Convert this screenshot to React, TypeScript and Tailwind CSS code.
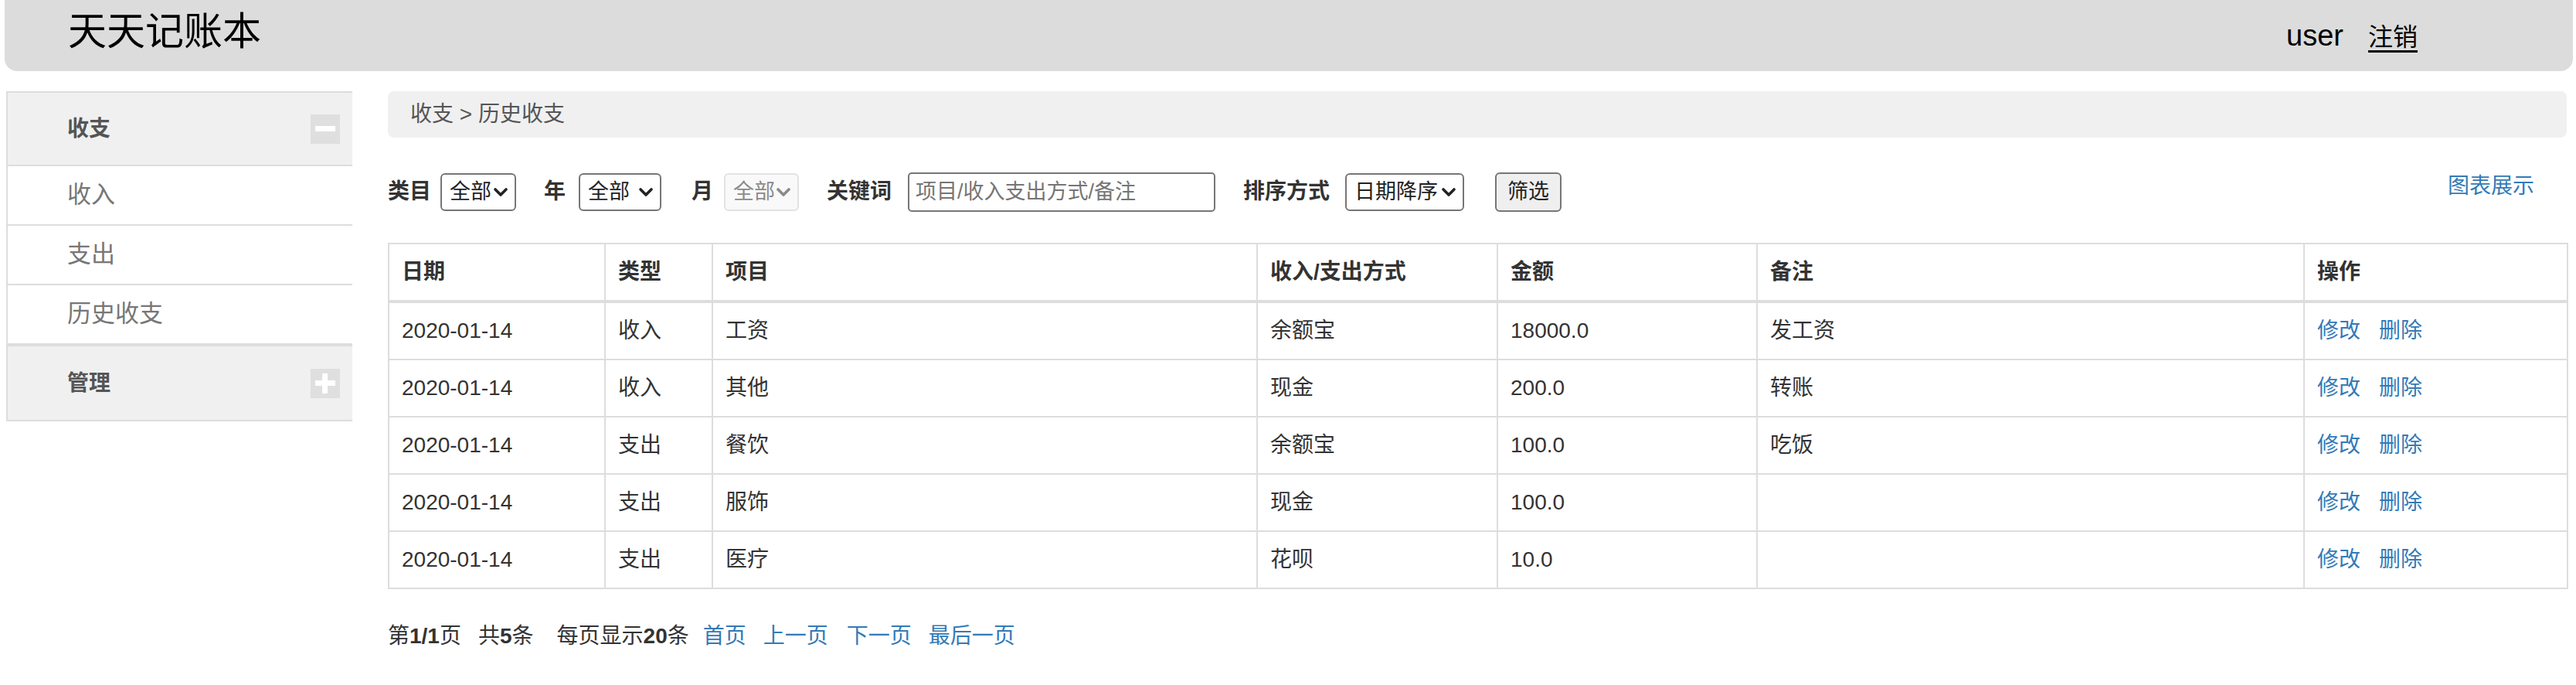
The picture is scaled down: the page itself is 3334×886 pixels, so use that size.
import React from "react";

const rows = [
  { date: "2020-01-14", type: "收入", item: "工资", way: "余额宝", amount: "18000.0", note: "发工资" },
  { date: "2020-01-14", type: "收入", item: "其他", way: "现金", amount: "200.0", note: "转账" },
  { date: "2020-01-14", type: "支出", item: "餐饮", way: "余额宝", amount: "100.0", note: "吃饭" },
  { date: "2020-01-14", type: "支出", item: "服饰", way: "现金", amount: "100.0", note: "" },
  { date: "2020-01-14", type: "支出", item: "医疗", way: "花呗", amount: "10.0", note: "" },
];

function Chevron() {
  return (
    <svg width="20" height="13" viewBox="0 0 20 13" className="shrink-0">
      <path d="M3 3 L10 10 L17 3" fill="none" stroke="currentColor" strokeWidth="3.6" strokeLinecap="round" strokeLinejoin="round" />
    </svg>
  );
}

function FakeSelect({ value, width, disabled }: { value: string; width: string; disabled?: boolean }) {
  return (
    <div
      className={`${width} flex items-center justify-between h-[49px] pl-[10px] pr-[8px] rounded-[6px] border-2 text-[27px] leading-none ${
        disabled ? "border-[#e2e2e2] bg-[#f9f9f9] text-[#8a8a8a]" : "border-[#767676] bg-white text-[#222]"
      }`}
    >
      <span>{value}</span>
      <Chevron />
    </div>
  );
}

function Toggle({ open }: { open: boolean }) {
  return (
    <div className="relative w-[38px] h-[38px] bg-[#dfdfdf]">
      <div className="absolute left-[6px] top-[15px] w-[26px] h-[7px] bg-white" />
      {!open && <div className="absolute left-[15px] top-[6px] w-[7px] h-[26px] bg-white" />}
    </div>
  );
}

function Sidebar() {
  return (
    <aside className="ml-[8px] w-[448px] border-l-2 border-t-2 border-b-2 border-[#dddddd] self-start">
      <div className="h-[95px] bg-[#f0f0f0] border-b-2 border-[#dddddd] flex items-center justify-between pl-[77px] pr-[16px]">
        <span className="text-[28px] font-bold text-[#555]">收支</span>
        <Toggle open />
      </div>
      {["收入", "支出", "历史收支"].map((t) => (
        <div key={t} className="h-[77px] border-b-2 border-[#dddddd] flex items-center pl-[77px] text-[31px] text-[#777]">
          {t}
        </div>
      ))}
      <div className="h-[97px] bg-[#f0f0f0] border-t-2 border-[#dddddd] flex items-center justify-between pl-[77px] pr-[16px]">
        <span className="text-[28px] font-bold text-[#555]">管理</span>
        <Toggle open={false} />
      </div>
    </aside>
  );
}

export default function App() {
  return (
    <div className="min-h-screen bg-white text-[#333] font-['Liberation_Sans','Noto_Sans_CJK_SC',sans-serif]">
      {/* Header */}
      <header className="ml-[6px] mr-[4px] h-[92px] bg-[#dcdcdc] rounded-b-[16px] flex items-center justify-between pl-[82px] pr-[201px]">
        <h1 className="text-[50px] leading-none font-normal text-black pb-[10px]">天天记账本</h1>
        <div className="flex items-baseline gap-[32px] text-black">
          <span className="text-[38px]">user</span>
          <a className="text-[32px] underline underline-offset-[6px]">注销</a>
        </div>
      </header>

      <div className="flex mt-[26px]">
        <Sidebar />

        <main className="ml-[46px] w-[2820px]">
          {/* Breadcrumb */}
          <div className="h-[60px] bg-[#f0f0f0] rounded-[8px] flex items-center pl-[29px] text-[28px] text-[#555]">
            收支 &gt; 历史收支
          </div>

          {/* Filters */}
          <div className="mt-[42px] flex items-center text-[28px]">
            <span className="font-bold text-[#333]">类目</span>
            <div className="ml-[12px]">
              <FakeSelect value="全部" width="w-[98px]" />
            </div>
            <span className="ml-[36px] font-bold">年</span>
            <div className="ml-[17px]">
              <FakeSelect value="全部" width="w-[107px]" />
            </div>
            <span className="ml-[39px] font-bold">月</span>
            <div className="ml-[14px]">
              <FakeSelect value="全部" width="w-[97px]" disabled />
            </div>
            <span className="ml-[36px] font-bold">关键词</span>
            <input
              className="ml-[21px] h-[51px] w-[398px] border-2 border-[#767676] rounded-[5px] px-[8px] text-[27px] text-[#222] placeholder:text-[#757575] outline-none"
              placeholder="项目/收入支出方式/备注"
            />
            <span className="ml-[36px] font-bold">排序方式</span>
            <div className="ml-[20px]">
              <FakeSelect value="日期降序" width="w-[154px]" />
            </div>
            <button className="ml-[40px] h-[51px] w-[86px] bg-[#efefef] border-2 border-[#767676] rounded-[6px] text-[27px] text-[#222]">
              筛选
            </button>
            <a className="ml-auto mr-[42px] mb-[14px] text-[28px] text-[#337ab7]">图表展示</a>
          </div>

          {/* Table */}
          <table className="mt-[38px] w-[2820px] table-fixed border-collapse border-2 border-[#dddddd] text-[28px] leading-[40px]">
            <colgroup>
              <col className="w-[280px]" />
              <col className="w-[139px]" />
              <col className="w-[705px]" />
              <col className="w-[311px]" />
              <col className="w-[336px]" />
              <col className="w-[708px]" />
              <col className="w-[341px]" />
            </colgroup>
            <thead>
              <tr>
                {["日期", "类型", "项目", "收入/支出方式", "金额", "备注", "操作"].map((h) => (
                  <th key={h} className="text-left font-bold px-[16px] py-[16px] border-2 border-b-4 border-[#dddddd]">
                    {h}
                  </th>
                ))}
              </tr>
            </thead>
            <tbody>
              {rows.map((r, i) => (
                <tr key={i}>
                  <td className="px-[16px] py-[16px] border-2 border-[#dddddd]">{r.date}</td>
                  <td className="px-[16px] py-[16px] border-2 border-[#dddddd]">{r.type}</td>
                  <td className="px-[16px] py-[16px] border-2 border-[#dddddd]">{r.item}</td>
                  <td className="px-[16px] py-[16px] border-2 border-[#dddddd]">{r.way}</td>
                  <td className="px-[16px] py-[16px] border-2 border-[#dddddd]">{r.amount}</td>
                  <td className="px-[16px] py-[16px] border-2 border-[#dddddd]">{r.note}</td>
                  <td className="px-[16px] py-[16px] border-2 border-[#dddddd] text-[#337ab7]">
                    <a className="mr-[24px]">修改</a>
                    <a>删除</a>
                  </td>
                </tr>
              ))}
            </tbody>
          </table>

          {/* Pagination */}
          <div className="mt-[41px] flex items-center text-[28px] leading-[40px]">
            <span>
              第<b>1/1</b>页
            </span>
            <span className="ml-[22px]">
              共<b>5</b>条
            </span>
            <span className="ml-[30px]">
              每页显示<b>20</b>条
            </span>
            <a className="ml-[18px] text-[#337ab7]">首页</a>
            <a className="ml-[22px] text-[#337ab7]">上一页</a>
            <a className="ml-[24px] text-[#337ab7]">下一页</a>
            <a className="ml-[22px] text-[#337ab7]">最后一页</a>
          </div>
        </main>
      </div>
    </div>
  );
}
